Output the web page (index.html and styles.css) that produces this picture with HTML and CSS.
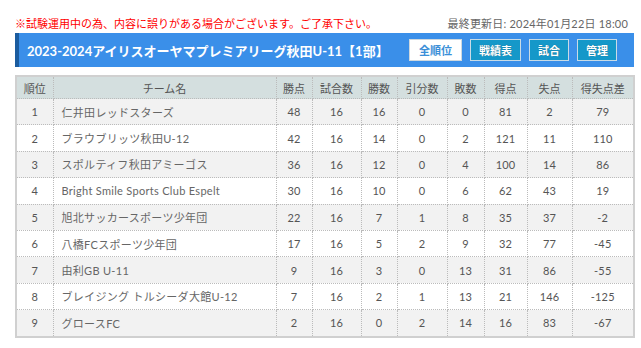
FILE: index.html
```html
<!DOCTYPE html>
<html lang="ja">
<head>
<meta charset="utf-8">
<link rel="stylesheet" href="styles.css">
</head>
<body>
<div class="page">
  <div class="topline">
    <span class="notice">※試験運用中の為、内容に誤りがある場合がございます。ご了承下さい。</span>
    <span class="updated">最終更新日: 2024年01月22日 18:00</span>
  </div>
  <div class="bar">
    <h1 class="title">2023-2024アイリスオーヤマプレミアリーグ秋田U-11【1部】</h1>
    <nav class="tabs">
      <span class="tab tab-active">全順位</span>
      <span class="tab">戦績表</span>
      <span class="tab">試合</span>
      <span class="tab">管理</span>
    </nav>
  </div>
  <table class="standings">
    <colgroup>
      <col class="c-rank"><col class="c-team"><col class="c-pts"><col class="c-gp"><col class="c-w"><col class="c-d"><col class="c-l"><col class="c-gf"><col class="c-ga"><col class="c-gd">
    </colgroup>
    <thead>
      <tr><th>順位</th><th>チーム名</th><th>勝点</th><th>試合数</th><th>勝数</th><th>引分数</th><th>敗数</th><th>得点</th><th>失点</th><th>得失点差</th></tr>
    </thead>
    <tbody>
      <tr><td>1</td><td class="team">仁井田レッドスターズ</td><td>48</td><td>16</td><td>16</td><td>0</td><td>0</td><td>81</td><td>2</td><td>79</td></tr>
      <tr><td>2</td><td class="team">ブラウブリッツ秋田U-12</td><td>42</td><td>16</td><td>14</td><td>0</td><td>2</td><td>121</td><td>11</td><td>110</td></tr>
      <tr><td>3</td><td class="team">スポルティフ秋田アミーゴス</td><td>36</td><td>16</td><td>12</td><td>0</td><td>4</td><td>100</td><td>14</td><td>86</td></tr>
      <tr><td>4</td><td class="team">Bright Smile Sports Club Espelt</td><td>30</td><td>16</td><td>10</td><td>0</td><td>6</td><td>62</td><td>43</td><td>19</td></tr>
      <tr><td>5</td><td class="team">旭北サッカースポーツ少年団</td><td>22</td><td>16</td><td>7</td><td>1</td><td>8</td><td>35</td><td>37</td><td>-2</td></tr>
      <tr><td>6</td><td class="team">八橋FCスポーツ少年団</td><td>17</td><td>16</td><td>5</td><td>2</td><td>9</td><td>32</td><td>77</td><td>-45</td></tr>
      <tr><td>7</td><td class="team">由利GB U-11</td><td>9</td><td>16</td><td>3</td><td>0</td><td>13</td><td>31</td><td>86</td><td>-55</td></tr>
      <tr><td>8</td><td class="team">ブレイジング トルシーダ大館U-12</td><td>7</td><td>16</td><td>2</td><td>1</td><td>13</td><td>21</td><td>146</td><td>-125</td></tr>
      <tr><td>9</td><td class="team">グロースFC</td><td>2</td><td>16</td><td>0</td><td>2</td><td>14</td><td>16</td><td>83</td><td>-67</td></tr>
    </tbody>
  </table>
</div>
</body>
</html>
```
FILE: styles.css
```css
html, body {
  margin: 0;
  padding: 0;
  background: #fff;
}
body {
  font-family: "Lato", "Noto Sans CJK JP", sans-serif;
  font-size: 11px;
  color: #555;
}
.page {
  padding: 12px 7px 0 15px;
}
.topline {
  display: flex;
  justify-content: space-between;
  align-items: center;
  height: 21px;
  padding-right: 6px;
}
.notice {
  color: #f00;
  font-size: 11px;
}
.updated {
  color: #666;
  font-size: 11px;
  letter-spacing: 0.2px;
}
.bar {
  display: flex;
  align-items: center;
  justify-content: space-between;
  height: 34px;
  background: #3a8fe9;
  border-left: 4px solid #1b5c9f;
  padding: 0 17px 0 8px;
  margin-bottom: 8px;
}
.title {
  margin: 0;
  color: #fff;
  font-size: 13px;
  font-weight: bold;
}
.tabs {
  display: flex;
  gap: 8px;
}
.tab {
  display: flex;
  align-items: center;
  justify-content: center;
  height: 20px;
  padding: 0 8px;
  border: 1px solid #c9dbe6;
  background: #1598c9;
  color: #fff;
  font-size: 11px;
  font-weight: bold;
  text-shadow: 0 0 1px rgba(0,0,0,0.4);
}
.tab-active {
  background: #fff;
  color: #3a8fd8;
  border-color: #cfd8de;
  padding: 0 9px;
  text-shadow: none;
}
.standings {
  width: 618px;
  table-layout: fixed;
  border-collapse: collapse;
  border: 2px solid #d0d0d0;
}
.c-rank { width: 37px; }
.c-team { width: 223px; }
.c-pts { width: 36px; }
.c-gp { width: 49px; }
.c-w { width: 36px; }
.c-d { width: 50px; }
.c-l { width: 37px; }
.c-gf { width: 43px; }
.c-ga { width: 45px; }
.c-gd { width: 62px; }
.standings th,
.standings td {
  border: 1px dotted #bbb;
  text-align: center;
  padding: 0;
  white-space: nowrap;
}
.standings th {
  height: 21px;
  background: #d4dfdf;
  color: #555;
  font-weight: normal;
  font-size: 11px;
}
.standings td {
  height: 25.4px;
  color: #555;
  letter-spacing: 0.2px;
}
.standings tbody tr:nth-child(odd) td {
  background: #f2f2f2;
}
.standings td.team {
  text-align: left;
  padding-left: 8px;
  color: #666;
  letter-spacing: 0.3px;
}
```
